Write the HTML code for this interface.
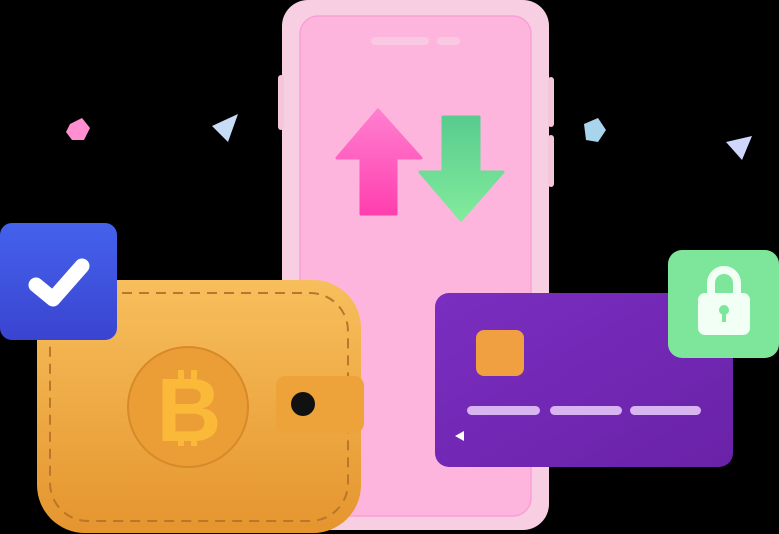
<!DOCTYPE html>
<html><head><style>
body{margin:0;background:#000;width:779px;height:534px;overflow:hidden;position:relative}
</style></head><body>
<svg width="779" height="534" style="position:absolute;left:0;top:0">
<defs>
<linearGradient id="wal" x1="0" y1="0" x2="0" y2="1"><stop offset="0" stop-color="#f7bf5c"/><stop offset="1" stop-color="#e5952e"/></linearGradient>
<linearGradient id="up" x1="0" y1="0" x2="0" y2="1"><stop offset="0" stop-color="#ff7fd0"/><stop offset="1" stop-color="#ff3fae"/></linearGradient>
<linearGradient id="dn" x1="0" y1="0" x2="0" y2="1"><stop offset="0" stop-color="#58cc8e"/><stop offset="1" stop-color="#82eb9c"/></linearGradient>
<linearGradient id="card" x1="0" y1="0" x2="1" y2="1"><stop offset="0" stop-color="#7a2ec0"/><stop offset="1" stop-color="#6a22a8"/></linearGradient>
<linearGradient id="chk" x1="0" y1="0" x2="0" y2="1"><stop offset="0" stop-color="#4462ec"/><stop offset="1" stop-color="#3a44d0"/></linearGradient>
</defs>
<polygon points="70,124 82,118 90,128 84,140 72,140 66,132" fill="#ff8fd0"/>
<polygon points="212,126 238,114 228,142" fill="#c8dcf5"/>
<polygon points="584,124 598,118 606,130 598,142 586,140" fill="#a8d4ee"/>
<polygon points="726,142 752,136 742,160" fill="#cfd8fb"/>
<rect x="282" y="0" width="267" height="530" rx="26" fill="#f8cfe2"/>
<rect x="278" y="75" width="6" height="55" rx="3" fill="#f4c6d8"/>
<rect x="548" y="77" width="6" height="50" rx="3" fill="#f4c6d8"/>
<rect x="548" y="135" width="6" height="52" rx="3" fill="#f4c6d8"/>
<rect x="300" y="16" width="231" height="500" rx="18" fill="#fdb5dd" stroke="#fb9fd3" stroke-width="1.5"/>
<rect x="371" y="37" width="58" height="8" rx="4" fill="#f9c8e2"/>
<rect x="437" y="37" width="23" height="8" rx="4" fill="#f9c8e2"/>
<path d="M378,110 L421,158 L396,158 L396,214 L361,214 L361,158 L337,158 Z" fill="url(#up)" stroke="url(#up)" stroke-linejoin="round" stroke-width="3"/>
<path d="M443,117 L479,117 L479,172 L503,172 L461,220 L420,172 L443,172 Z" fill="url(#dn)" stroke="url(#dn)" stroke-linejoin="round" stroke-width="3"/>
<rect x="37" y="280" width="324" height="253" rx="48" fill="url(#wal)"/>
<rect x="50" y="293" width="298" height="228" rx="38" fill="none" stroke="#b9762c" stroke-width="2" stroke-dasharray="10 7"/>
<circle cx="188" cy="407" r="60" fill="#eb9e36" stroke="#d8892a" stroke-width="2"/>
<text x="189" y="441" text-anchor="middle" font-family="Liberation Sans, sans-serif" font-weight="bold" font-size="90" fill="#fbb93a">B</text>
<rect x="178" y="370" width="6" height="12" fill="#fbb93a"/><rect x="191" y="370" width="6" height="12" fill="#fbb93a"/>
<rect x="178" y="434" width="6" height="12" fill="#fbb93a"/><rect x="191" y="434" width="6" height="12" fill="#fbb93a"/>
<rect x="276" y="376" width="88" height="57" rx="10" fill="#eea23a"/>
<circle cx="303" cy="404" r="12" fill="#111"/>
<rect x="0" y="223" width="117" height="117" rx="12" fill="url(#chk)"/>
<path d="M36,285 L53,299 L82,266" fill="none" stroke="#fff" stroke-width="15" stroke-linecap="round" stroke-linejoin="round"/>
<rect x="435" y="293" width="298" height="174" rx="14" fill="url(#card)"/>
<rect x="476" y="330" width="48" height="46" rx="8" fill="#f0a040"/>
<rect x="467" y="406" width="73" height="9" rx="4.5" fill="#d8b4f0"/>
<rect x="550" y="406" width="72" height="9" rx="4.5" fill="#d8b4f0"/>
<rect x="630" y="406" width="71" height="9" rx="4.5" fill="#d8b4f0"/>
<polygon points="455,436 464,431 464,441" fill="#fff"/>
<rect x="668" y="250" width="111" height="108" rx="14" fill="#7ee69a"/>
<path d="M711,296 V283 a13,13 0 0 1 26,0 V296" fill="none" stroke="#f2fff4" stroke-width="8"/>
<rect x="698" y="293" width="52" height="42" rx="7" fill="#f2fff4"/>
<circle cx="724" cy="310" r="5" fill="#7ee69a"/><rect x="722" y="310" width="4" height="12" fill="#7ee69a"/>
</svg>
</body></html>
